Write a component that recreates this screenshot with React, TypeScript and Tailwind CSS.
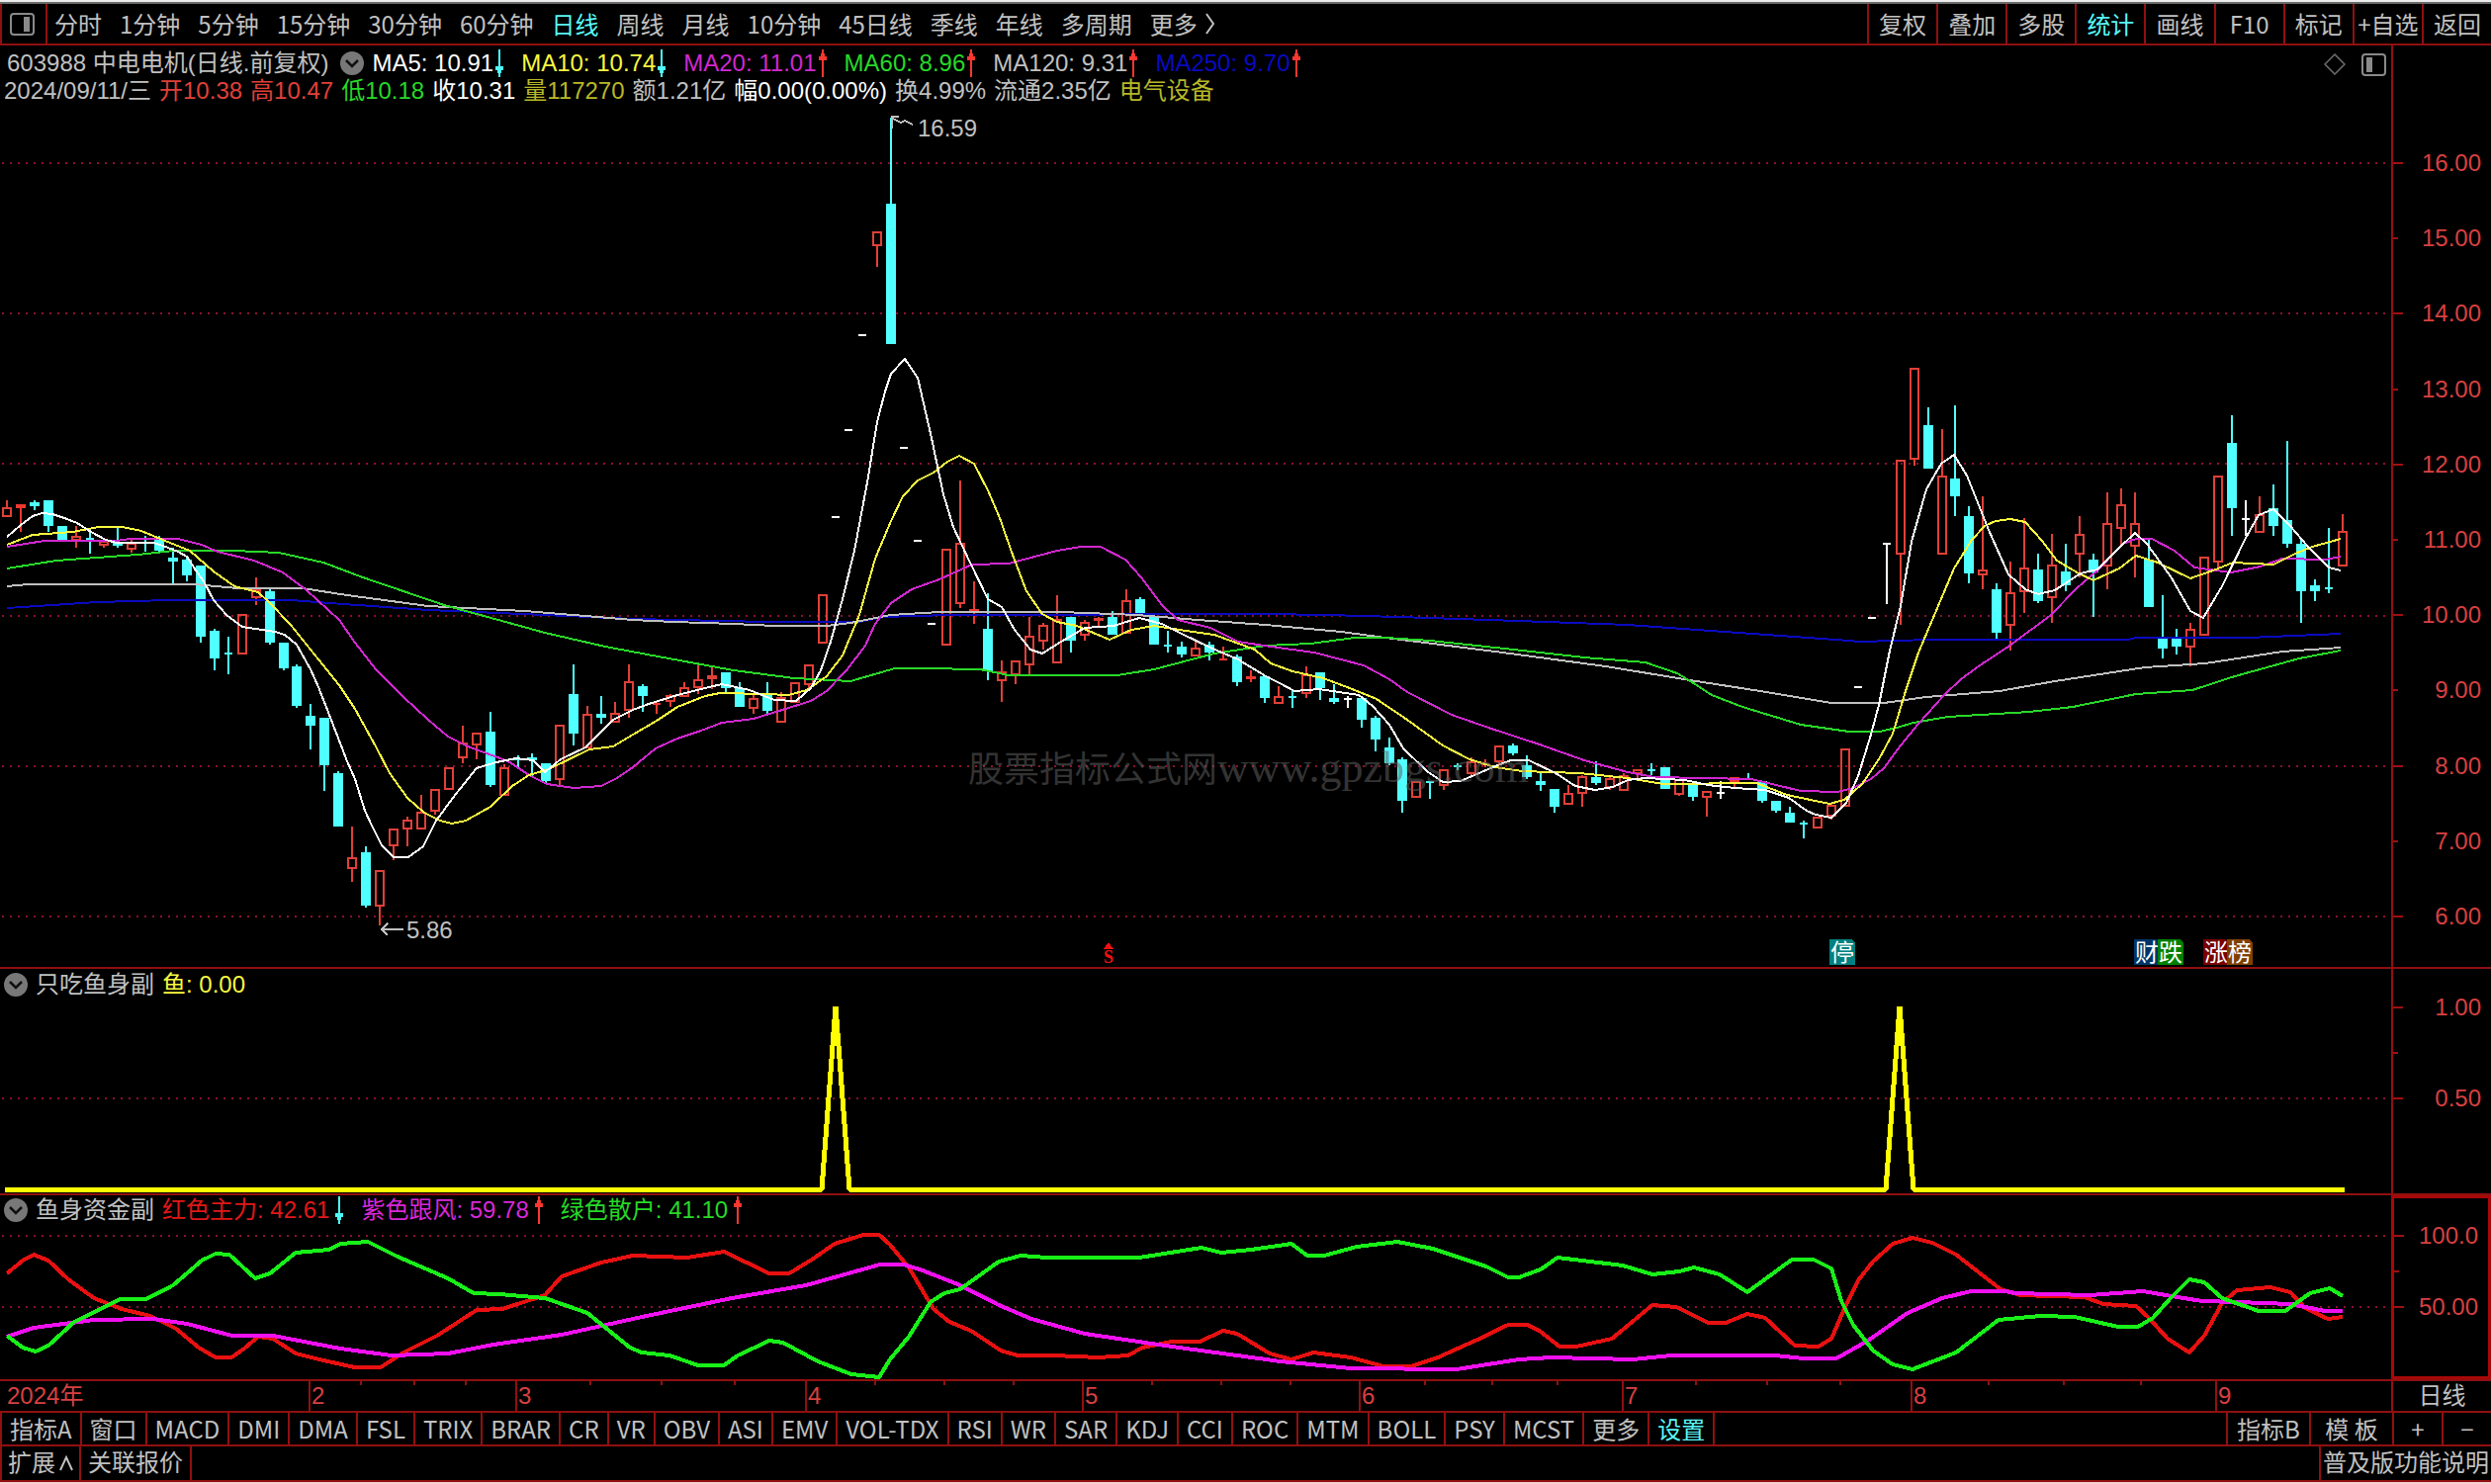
import { useState } from "react";

// kind: u = up (hollow), s = up (solid), d = down, w = flat, x = limit dash
type Candle = [string, number, number, number, number];

// kind, high, body top, body bottom, low
const CANDLES: Candle[] = [
  ["u", 506, 513, 523, 523], ["s", 510, 510, 514, 538], ["d", 506, 508, 512, 516],
  ["d", 506, 506, 532, 538], ["d", 532, 532, 546, 546], ["u", 532, 542, 547, 554],
  ["d", 537, 544, 546, 560], ["u", 547, 547, 552, 554], ["d", 533, 548, 552, 554],
  ["u", 546, 549, 556, 559], ["d", 542, 548, 549, 558], ["d", 542, 546, 557, 559],
  ["d", 554, 564, 568, 590], ["d", 564, 566, 582, 588], ["d", 572, 572, 644, 650],
  ["d", 636, 638, 666, 678], ["d", 644, 660, 662, 682], ["u", 621, 621, 662, 662],
  ["u", 584, 596, 605, 612], ["d", 596, 598, 650, 652], ["d", 650, 650, 676, 678],
  ["d", 672, 674, 714, 716], ["d", 712, 724, 734, 758], ["d", 726, 726, 774, 800],
  ["d", 780, 782, 836, 836], ["u", 836, 867, 879, 892], ["d", 856, 862, 916, 918],
  ["u", 880, 880, 917, 936], ["u", 838, 838, 856, 870], ["u", 826, 829, 839, 856],
  ["u", 804, 821, 839, 839], ["u", 798, 798, 821, 824], ["u", 776, 776, 799, 799],
  ["u", 734, 751, 767, 772], ["u", 741, 741, 754, 768], ["d", 720, 740, 794, 796],
  ["u", 773, 776, 805, 805], ["d", 764, 767, 769, 776], ["d", 762, 766, 769, 785],
  ["d", 772, 772, 790, 792], ["u", 733, 733, 789, 795], ["d", 672, 702, 742, 754],
  ["u", 714, 722, 757, 757], ["d", 704, 722, 726, 732], ["u", 710, 721, 731, 731],
  ["u", 672, 689, 719, 726], ["d", 692, 694, 704, 720], ["s", 709, 711, 713, 722],
  ["u", 702, 703, 710, 715], ["u", 690, 695, 705, 705], ["u", 670, 687, 696, 702],
  ["u", 674, 683, 687, 697], ["d", 680, 680, 696, 700], ["d", 690, 696, 715, 715],
  ["u", 702, 706, 717, 722], ["d", 690, 703, 719, 722], ["u", 700, 705, 731, 731],
  ["u", 690, 690, 711, 711], ["u", 672, 672, 693, 697], ["u", 601, 601, 651, 651],
  ["x", 523, 523, 523, 526], ["x", 435, 435, 435, 435], ["x", 339, 339, 339, 339],
  ["u", 234, 234, 249, 270], ["d", 119, 206, 348, 348], ["x", 453, 453, 453, 453],
  ["x", 547, 547, 547, 547], ["x", 631, 631, 631, 631], ["u", 555, 555, 653, 653],
  ["u", 486, 549, 611, 615], ["s", 588, 616, 619, 631], ["d", 600, 636, 679, 688],
  ["u", 668, 679, 689, 710], ["u", 668, 668, 683, 692], ["u", 624, 643, 673, 682],
  ["u", 630, 632, 649, 657], ["u", 602, 626, 671, 671], ["d", 624, 624, 648, 660],
  ["u", 627, 629, 643, 648], ["u", 624, 625, 628, 634], ["d", 618, 624, 642, 642],
  ["u", 596, 607, 641, 641], ["d", 604, 606, 620, 620], ["d", 624, 624, 652, 652],
  ["d", 638, 652, 654, 660], ["d", 649, 654, 662, 665], ["u", 649, 655, 664, 664],
  ["d", 649, 652, 660, 668], ["s", 654, 666, 668, 668], ["d", 662, 664, 690, 694],
  ["s", 678, 684, 687, 690], ["d", 684, 684, 706, 711], ["u", 694, 704, 712, 712],
  ["d", 699, 704, 706, 716], ["u", 674, 682, 702, 706], ["d", 680, 680, 696, 708],
  ["d", 692, 706, 710, 712], ["w", 704, 706, 708, 716], ["d", 706, 706, 728, 736],
  ["d", 724, 726, 748, 760], ["d", 746, 756, 772, 774], ["d", 766, 768, 810, 822],
  ["u", 790, 790, 807, 807], ["d", 790, 790, 792, 808], ["u", 778, 778, 795, 799],
  ["d", 772, 774, 775, 779], ["u", 766, 770, 783, 785], ["s", 768, 772, 774, 776],
  ["u", 754, 754, 771, 773], ["d", 752, 754, 762, 764], ["d", 764, 774, 786, 788],
  ["d", 780, 790, 794, 800], ["d", 798, 798, 816, 822], ["u", 794, 802, 814, 814],
  ["u", 784, 785, 803, 816], ["d", 770, 786, 792, 794], ["u", 784, 787, 797, 799],
  ["u", 782, 784, 800, 800], ["u", 778, 778, 783, 787], ["d", 772, 778, 780, 784],
  ["d", 776, 776, 798, 798], ["u", 788, 788, 804, 805], ["d", 792, 792, 806, 810],
  ["u", 800, 800, 807, 826], ["w", 790, 801, 803, 808], ["s", 786, 786, 792, 798],
  ["d", 782, 787, 789, 789], ["d", 790, 790, 810, 812], ["d", 810, 810, 820, 822],
  ["d", 816, 822, 832, 832], ["d", 830, 832, 834, 848], ["u", 826, 826, 838, 838],
  ["u", 813, 814, 826, 829], ["u", 757, 757, 816, 816], ["x", 695, 695, 695, 695],
  ["x", 625, 625, 625, 625], ["w", 549, 549, 550, 611], ["u", 465, 465, 561, 632],
  ["u", 372, 372, 465, 471], ["d", 412, 430, 474, 474], ["u", 434, 481, 561, 561],
  ["d", 410, 484, 502, 522], ["d", 512, 522, 580, 590], ["u", 502, 576, 582, 596],
  ["d", 590, 596, 640, 646], ["u", 568, 599, 633, 658], ["u", 524, 574, 599, 620],
  ["d", 560, 576, 608, 610], ["u", 540, 571, 605, 630], ["d", 550, 578, 592, 598],
  ["u", 522, 540, 561, 584], ["d", 560, 566, 579, 624], ["u", 498, 529, 573, 596],
  ["u", 494, 510, 535, 552], ["u", 498, 529, 553, 584], ["d", 546, 566, 614, 614],
  ["d", 602, 646, 656, 666], ["d", 636, 646, 654, 662], ["u", 630, 636, 655, 674],
  ["u", 563, 563, 643, 643], ["u", 481, 481, 569, 575], ["d", 420, 448, 514, 542],
  ["w", 506, 524, 526, 542], ["u", 502, 520, 539, 539], ["d", 490, 514, 532, 542],
  ["d", 446, 526, 550, 554], ["d", 546, 550, 598, 630], ["d", 586, 592, 598, 608],
  ["d", 534, 594, 596, 600], ["u", 520, 537, 573, 573],
];

// moving averages, drawn long to short
const AVERAGES = [
  {
    color: "#0a0ac0",
    points:
      "7,615 98,609 171,607 294,607 347,611 433,617 551,622 640,626 775,629 869,629 893,624 960,622 1280,621 1342,622 1414,624 1535,628 1646,632 1758,640 1870,648 1880,649 1953,647 2152,647 2160,645 2273,645 2367,641",
  },
  {
    color: "#c0c0c0",
    points:
      "7,593 29,591 196,591 241,595 306,595 351,602 433,613 531,618 640,627 681,629 742,631 783,633 836,633 860,630 901,622 950,619 1073,619 1150,622 1211,627 1280,632 1356,639 1401,645 1512,659 1624,674 1709,688 1780,699 1852,711 1905,711 1948,705 2022,699 2078,689 2169,675 2230,671 2308,659 2367,655",
  },
  {
    color: "#28d828",
    points:
      "7,575 57,567 139,561 176,557 237,557 282,559 327,569 367,584 408,598 449,612 482,621 551,640 612,654 660,663 742,678 803,686 860,689 905,676 934,676 991,677 1020,683 1130,683 1167,677 1228,661 1280,653 1325,651 1370,645 1401,645 1446,648 1512,655 1602,665 1664,670 1696,681 1711,690 1731,703 1762,715 1821,733 1870,740 1901,740 1918,736 1935,731 1970,725 2052,720 2096,715 2160,702 2217,698 2260,684 2325,666 2367,658",
  },
  {
    color: "#d028d0",
    points:
      "7,553 45,547 118,547 131,545 180,545 204,551 220,558 257,567 286,579 310,597 343,627 359,650 380,677 408,705 433,728 453,745 473,755 514,770 535,784 553,793 580,797 608,795 624,787 640,776 663,757 685,747 709,739 730,731 762,727 791,718 820,709 836,699 856,678 875,653 885,631 901,610 922,596 950,586 983,571 1020,570 1069,557 1093,553 1113,553 1138,566 1154,584 1175,612 1191,627 1224,635 1252,649 1285,654 1329,660 1379,673 1405,687 1423,700 1468,723 1508,737 1557,753 1602,769 1646,781 1673,786 1771,788 1821,800 1858,801 1874,797 1892,788 1905,777 1922,754 1940,732 1966,703 1983,687 2005,671 2031,654 2074,622 2100,595 2121,577 2147,550 2160,545 2176,545 2199,557 2219,574 2256,579 2286,573 2308,565 2351,566 2367,563",
  },
  {
    color: "#f8f840",
    points:
      "7,551 33,541 73,538 100,533 124,533 143,537 167,547 192,557 216,578 237,593 261,599 273,610 294,632 318,662 343,693 359,717 380,755 394,782 412,807 429,822 445,830 457,833 471,830 496,816 518,795 535,784 555,778 596,758 620,755 640,743 664,729 685,715 713,704 728,701 775,702 797,703 816,698 836,684 852,663 869,622 885,565 901,527 913,502 928,486 944,478 958,467 970,461 985,469 999,496 1011,524 1024,561 1038,598 1054,621 1069,629 1089,633 1122,647 1144,637 1167,633 1199,638 1228,642 1269,657 1285,671 1307,679 1338,686 1365,696 1392,707 1423,728 1459,754 1486,768 1512,776 1539,780 1597,782 1646,787 1682,793 1776,792 1807,804 1850,813 1865,809 1883,793 1900,768 1914,742 1927,699 1940,660 1957,620 1976,575 1994,546 2007,532 2018,527 2033,525 2048,528 2065,547 2080,567 2102,580 2117,587 2143,575 2160,562 2182,569 2215,585 2238,577 2258,569 2299,571 2321,560 2338,553 2367,545",
  },
  {
    color: "#ffffff",
    points:
      "7,543 21,531 33,522 43,519 53,520 65,524 78,529 92,538 107,546 118,549 155,549 165,552 180,558 189,563 198,577 206,588 216,607 229,622 245,634 265,637 278,639 288,642 300,652 314,677 322,695 333,723 351,770 359,788 369,820 376,835 386,855 398,867 413,867 428,856 441,830 461,803 482,777 502,771 522,767 539,769 551,781 567,768 592,756 620,728 640,718 656,712 685,703 713,696 730,692 758,698 783,708 805,709 820,696 830,678 840,649 852,606 864,557 877,488 887,427 895,396 901,378 915,363 928,382 942,443 954,500 964,533 981,569 999,606 1013,614 1026,637 1042,657 1054,661 1073,649 1097,635 1126,633 1152,625 1175,631 1195,641 1224,655 1252,667 1280,684 1294,691 1309,699 1334,697 1374,703 1388,714 1405,733 1419,757 1443,780 1459,791 1477,790 1512,775 1528,769 1546,769 1573,782 1593,795 1613,799 1631,796 1646,789 1664,787 1704,789 1727,794 1754,797 1785,799 1809,807 1827,820 1836,824 1852,827 1867,812 1879,785 1892,743 1900,713 1911,658 1922,613 1933,548 1948,495 1963,469 1976,460 1989,481 2011,536 2031,581 2048,596 2061,601 2078,597 2104,580 2121,576 2143,554 2159,539 2171,550 2195,583 2215,618 2228,625 2247,593 2271,544 2284,521 2299,515 2316,532 2334,553 2355,574 2367,577",
  },
];

const FLOWS = [
  {
    color: "#e81010",
    points:
      "7,1288 23,1275 34,1269 49,1275 69,1294 95,1313 123,1324 152,1331 178,1344 201,1363 218,1373 234,1373 247,1364 261,1352 276,1354 299,1369 327,1376 359,1383 385,1383 408,1368 442,1351 482,1325 508,1324 551,1310 568,1291 608,1277 640,1270 695,1272 732,1266 778,1288 798,1288 821,1274 844,1258 873,1249 889,1249 900,1259 919,1282 944,1324 960,1337 982,1346 1012,1366 1029,1371 1065,1371 1111,1373 1141,1371 1155,1363 1185,1357 1213,1357 1237,1346 1251,1349 1284,1369 1306,1375 1328,1368 1366,1373 1399,1382 1427,1382 1454,1373 1503,1351 1525,1340 1545,1340 1558,1347 1577,1362 1594,1362 1630,1354 1671,1320 1695,1322 1728,1338 1745,1338 1767,1329 1785,1333 1815,1361 1839,1362 1852,1354 1864,1326 1879,1295 1894,1276 1914,1258 1934,1252 1954,1257 1978,1269 2023,1304 2043,1310 2108,1312 2127,1319 2160,1321 2172,1332 2192,1354 2214,1368 2229,1351 2247,1318 2262,1305 2296,1302 2316,1307 2331,1323 2354,1334 2369,1332",
  },
  {
    color: "#f010f0",
    points:
      "7,1352 34,1343 95,1335 155,1334 189,1339 235,1351 276,1351 344,1364 396,1371 453,1369 499,1360 568,1350 649,1332 740,1313 815,1300 890,1279 914,1279 933,1285 971,1300 1010,1320 1043,1334 1097,1349 1185,1362 1295,1377 1366,1384 1473,1385 1536,1375 1569,1373 1651,1375 1690,1371 1795,1371 1824,1374 1857,1374 1889,1356 1929,1328 1964,1313 1993,1306 2028,1306 2038,1308 2113,1310 2167,1306 2202,1312 2227,1316 2262,1317 2316,1319 2351,1326 2369,1326",
  },
  {
    color: "#18f018",
    points:
      "7,1351 23,1363 36,1367 49,1361 75,1337 98,1326 121,1314 148,1314 175,1300 204,1275 218,1268 232,1269 258,1293 273,1288 299,1267 333,1264 344,1258 372,1256 402,1271 453,1293 479,1308 505,1309 551,1313 594,1328 637,1363 649,1368 677,1371 706,1381 732,1381 746,1371 778,1356 792,1358 827,1377 861,1390 889,1393 900,1375 919,1352 941,1317 955,1308 971,1304 1010,1276 1032,1270 1059,1272 1152,1272 1215,1262 1235,1267 1265,1264 1306,1258 1322,1270 1339,1270 1372,1261 1413,1256 1449,1263 1503,1281 1525,1292 1536,1292 1558,1284 1575,1272 1608,1276 1641,1280 1671,1289 1698,1286 1713,1282 1739,1289 1767,1307 1812,1274 1834,1274 1852,1283 1862,1316 1874,1340 1894,1366 1914,1380 1934,1385 1978,1368 2021,1335 2063,1331 2098,1332 2142,1342 2162,1342 2177,1333 2195,1313 2214,1294 2229,1297 2247,1313 2284,1326 2311,1326 2336,1308 2356,1303 2369,1311",
  },
];

const PERIODS = [
  "分时", "1分钟", "5分钟", "15分钟", "30分钟", "60分钟", "日线", "周线",
  "月线", "10分钟", "45日线", "季线", "年线", "多周期",
];

const TOOLS = ["复权", "叠加", "多股", "统计", "画线", "F10", "标记", "+自选", "返回"];

const INDICATORS = [
  "指标A", "窗口", "MACD", "DMI", "DMA", "FSL", "TRIX", "BRAR", "CR", "VR",
  "OBV", "ASI", "EMV", "VOL-TDX", "RSI", "WR", "SAR", "KDJ", "CCI", "ROC",
  "MTM", "BOLL", "PSY", "MCST", "更多", "设置",
];

const PRICES = [
  "16.00", "15.00", "14.00", "13.00", "12.00", "11.00", "10.00", "9.00",
  "8.00", "7.00", "6.00",
];

const MONTHS = [
  { x: 313, label: "2" }, { x: 522, label: "3" }, { x: 815, label: "4" },
  { x: 1095, label: "5" }, { x: 1375, label: "6" }, { x: 1641, label: "7" },
  { x: 1933, label: "8" }, { x: 2241, label: "9" },
];

const WEEKS = [
  365, 419, 471, 597, 669, 743, 885, 955, 1025, 1165, 1235, 1305, 1441, 1509,
  1575, 1715, 1787, 1861, 2011, 2087, 2165,
];

const BADGES = [
  { x: 1850, label: "停", color: "#008080" },
  { x: 2158, label: "财", color: "#003468" },
  { x: 2182, label: "跌", color: "#008000" },
  { x: 2228, label: "涨", color: "#780000" },
  { x: 2252, label: "榜", color: "#804000" },
];

const Arrow = ({ up = false }: { up?: boolean }) => (
  <svg
    width="12"
    height="28"
    viewBox="0 0 12 28"
    shapeRendering="crispEdges"
    className={up ? "shrink-0 text-[#f83830]" : "shrink-0 rotate-180 text-[#50f8f8]"}
  >
    <path d="M5 0h2v28h-2z M4 4h4v3h2v4h-8v-4h2z" fill="currentColor" />
  </svg>
);

const Toggle = ({ label }: { label: string }) => (
  <button type="button" aria-label={label} className="flex shrink-0">
    <svg width="24" height="24" viewBox="0 0 24 24">
      <circle cx="12" cy="12" r="12" fill="#787878" />
      <path d="M6 9l6 6 6-6" fill="none" stroke="#101010" strokeWidth="2.5" />
    </svg>
  </button>
);

const PanelIcon = ({ left = false }: { left?: boolean }) => (
  <svg width="25" height="23" viewBox="0 0 25 23">
    <rect x="1" y="1" width="23" height="21" rx="3" fill="none" stroke="#8a8a8a" strokeWidth="2" />
    <rect x={left ? 5 : 14} y="4" width="6" height="15" fill="#8a8a8a" />
  </svg>
);

const Grid = ({ rows }: { rows: number[] }) => (
  <>
    {rows.map((y) => (
      <line key={y} x1="2" x2="2416" y1={y} y2={y} stroke="#8c1030" strokeWidth="2" strokeDasharray="2 6" />
    ))}
  </>
);

const COLORS: Record<string, string> = {
  u: "#e04038",
  s: "#f03830",
  d: "#50ffff",
  w: "#ffffff",
  x: "#ffffff",
};

const CandleShape = ({ index, data }: { index: number; data: Candle }) => {
  const [kind, high, top, bottom, low] = data;
  const x = Math.round(7 + index * 13.975);
  const color = COLORS[kind];

  if (kind === "x") {
    return <rect x={x - 5} y={top - 1} width="8" height="2" fill={color} />;
  }

  const thin = bottom - top < 3;
  const half = thin ? 4 : 5;

  return (
    <g fill={color}>
      {high < top && <rect x={x - 1} y={high} width="2" height={top - high} />}
      {low > bottom && <rect x={x - 1} y={bottom} width="2" height={low - bottom} />}
      {kind === "u" ? (
        <rect
          x={x - 4}
          y={top + 1}
          width="8"
          height={Math.max(bottom - top - 2, 1)}
          fill="none"
          stroke={color}
          strokeWidth="2"
        />
      ) : (
        <rect x={x - half} y={top} width={half * 2} height={Math.max(bottom - top, 2)} />
      )}
    </g>
  );
};

const AxisLabel = ({ text, major = true }: { text: string; major?: boolean }) => (
  <div className="flex flex-1 items-center justify-between pr-[10px]">
    <i className={major ? "h-[2px] w-[10px] bg-[#a01010]" : "h-[2px] w-[5px] bg-[#a01010]"} />
    <span>{text}</span>
  </div>
);

export default function App() {
  const [period, setPeriod] = useState("日线");
  const [indicator, setIndicator] = useState("设置");

  return (
    <main className="flex h-screen flex-col overflow-hidden bg-black font-['Liberation_Sans','Noto_Sans_CJK_SC',sans-serif] text-[24px] leading-[28px] whitespace-nowrap text-[#c0c0c0]">
      <div className="h-[4px] shrink-0 border-b-2 border-[#686868] bg-[#ececec]" />

      {/* TOOLBAR */}

      <header className="flex h-[42px] shrink-0 justify-between border-b-2 border-l-2 border-[#901010] font-['Noto_Sans_CJK_SC',sans-serif]">
        <nav className="flex items-center">
          <button
            type="button"
            aria-label="侧栏"
            className="mr-[7px] flex h-full w-[46px] items-center border-r-2 border-[#901010] pl-2"
          >
            <PanelIcon />
          </button>
          <div className="flex gap-[18px]">
            {PERIODS.map((name) => (
              <button
                key={name}
                type="button"
                onClick={() => setPeriod(name)}
                className={name === period ? "text-[#58f8f8]" : ""}
              >
                {name}
              </button>
            ))}
            <button type="button" className="flex items-center gap-2">
              更多
              <svg width="10" height="22" viewBox="0 0 10 22">
                <path d="M1 1l7 10-7 10" fill="none" stroke="#c0c0c0" strokeWidth="2" />
              </svg>
            </button>
          </div>
        </nav>
        <div className="grid w-[631px] grid-cols-9">
          {TOOLS.map((name) => (
            <button
              key={name}
              type="button"
              className={
                name === "统计"
                  ? "border-l-2 border-[#901010] text-[#58f8f8]"
                  : "border-l-2 border-[#901010]"
              }
            >
              {name}
            </button>
          ))}
        </div>
      </header>

      {/* PRICE CHART */}

      <section className="flex min-h-0 flex-1 border-b-2 border-[#901010]">
        <div className="relative min-w-0 flex-1">
          <svg
            viewBox="0 46 2418 932"
            preserveAspectRatio="none"
            shapeRendering="crispEdges"
            className="block h-full w-full overflow-visible"
          >
            <Grid rows={[165, 317, 469, 623, 775, 927]} />
            {CANDLES.map((data, i) => (
              <CandleShape key={i} index={i} data={data} />
            ))}
            {AVERAGES.map((line) => (
              <polyline key={line.color} points={line.points} fill="none" stroke={line.color} strokeWidth="2" />
            ))}

            <g fill="none" stroke="#c0c0c0" strokeWidth="2">
              <path d="M902 130v-12h7 M903 120l8 4 4-2 8 4" />
              <path d="M386 940h22 M392 934l-6 6 6 6" />
            </g>
            <text x="928" y="138" fill="#c0c0c0">16.59</text>
            <text x="411" y="949" fill="#c0c0c0">5.86</text>

            <text y="791" fill="#606060" fillOpacity="0.55" className="font-['Liberation_Serif','Noto_Sans_CJK_SC',serif]">
              <tspan x="979" className="text-[36px]">股票指标公式网</tspan>
              <tspan x="1231" className="text-[44px]">www.gpzbgs.com</tspan>
            </text>

            <path d="M1121 953l5 7h-10z" fill="#f01010" />
            <text x="1116" y="974" fill="#f01010" className="font-['Liberation_Serif',serif] text-[18px] font-bold">
              S
            </text>

            {BADGES.map((badge) => (
              <g key={badge.label}>
                <path d={`M${badge.x} 950h22l4 4v22h-26z`} fill={badge.color} />
                <text x={badge.x + 1} y="972" fill="#ffffff">
                  {badge.label}
                </text>
              </g>
            ))}
          </svg>

          <div className="absolute top-[4px] left-0 flex h-[28px] items-center">
            <span className="pl-[7px]">603988 中电电机(日线.前复权)</span>
            <span className="flex pr-2 pl-3"><Toggle label="主图指标" /></span>
            <span className="text-white">MA5: 10.91</span>
            <Arrow />
            <span className="pl-4 text-[#f8f840]">MA10: 10.74</span>
            <Arrow />
            <span className="pl-4 text-[#d028d0]">MA20: 11.01</span>
            <Arrow up />
            <span className="pl-4 text-[#28d828]">MA60: 8.96</span>
            <Arrow up />
            <span className="pl-4">MA120: 9.31</span>
            <Arrow up />
            <span className="pl-4 text-[#0a0ac0]">MA250: 9.70</span>
            <Arrow up />
          </div>
          <div className="absolute top-[32px] left-0 flex gap-2 pl-[4px]">
            <span>2024/09/11/三</span>
            <span className="text-[#e04038]">开10.38</span>
            <span className="text-[#e04038]">高10.47</span>
            <span className="text-[#28d828]">低10.18</span>
            <span className="text-white">收10.31</span>
            <span className="text-[#b8b828]">量117270</span>
            <span>额1.21亿</span>
            <span className="text-white">幅0.00(0.00%)</span>
            <span>换4.99%</span>
            <span>流通2.35亿</span>
            <span className="text-[#b8b828]">电气设备</span>
          </div>
          <div className="absolute top-[7px] right-[5px] flex items-center gap-4">
            <svg width="22" height="24" viewBox="0 0 22 24">
              <path d="M11 2l10 10-10 10L1 12z" fill="none" stroke="#707070" strokeWidth="1.5" />
            </svg>
            <button type="button" aria-label="布局">
              <PanelIcon left />
            </button>
          </div>
        </div>
        <div className="flex w-[101px] flex-col border-l-2 border-[#901010] pt-[81px] pb-[13px] text-[#d84040]">
          {PRICES.map((price, i) => (
            <AxisLabel key={price} text={price} major={i % 2 === 0} />
          ))}
        </div>
      </section>

      {/* SIGNAL */}

      <section className="flex h-[229px] shrink-0 border-b-2 border-[#901010]">
        <div className="relative min-w-0 flex-1">
          <svg
            viewBox="0 980 2418 227"
            preserveAspectRatio="none"
            shapeRendering="crispEdges"
            className="block h-full w-full"
          >
            <Grid rows={[1111]} />
            <path
              d="M5 1203H831L845 1018L859 1203H1907L1921 1018L1935 1203H2371"
              fill="none"
              stroke="#ffff00"
              strokeWidth="5"
              strokeLinejoin="bevel"
            />
          </svg>
          <div className="absolute top-0 left-[4px] flex h-[32px] items-center gap-[8px]">
            <Toggle label="只吃鱼身副" />
            <span>只吃鱼身副</span>
            <span className="text-[#f8f840]">鱼: 0.00</span>
          </div>
        </div>
        <div className="flex w-[101px] flex-col border-l-2 border-[#901010] pt-[16px] pb-[4px] text-[#d84040]">
          <div className="flex h-[46px]"><AxisLabel text="1.00" /></div>
          <div className="flex h-[46px]"><AxisLabel text="" major={false} /></div>
          <div className="flex h-[46px]"><AxisLabel text="0.50" /></div>
        </div>
      </section>

      {/* MONEY FLOW */}

      <section className="flex h-[188px] shrink-0 border-b-2 border-[#901010]">
        <div className="relative min-w-0 flex-1">
          <svg
            viewBox="0 1209 2418 186"
            preserveAspectRatio="none"
            shapeRendering="crispEdges"
            className="block h-full w-full"
          >
            <Grid rows={[1250, 1322]} />
            {FLOWS.map((line) => (
              <polyline key={line.color} points={line.points} fill="none" stroke={line.color} strokeWidth="4" />
            ))}
          </svg>
          <div className="absolute top-0 left-[4px] flex h-[30px] items-center gap-[8px]">
            <Toggle label="鱼身资金副" />
            <span>鱼身资金副</span>
            <span className="flex items-center gap-1 pr-2 text-[#e01818]">红色主力: 42.61<Arrow /></span>
            <span className="flex items-center gap-1 pr-2 text-[#d828d8]">紫色跟风: 59.78<Arrow up /></span>
            <span className="flex items-center gap-1 text-[#28d828]">绿色散户: 41.10<Arrow up /></span>
          </div>
        </div>
        <div className="flex w-[101px] flex-col border-[3px] border-[#a80808] pt-[20px] text-[#d84040]">
          <div className="flex h-[36px]"><AxisLabel text="100.0" /></div>
          <div className="flex h-[36px]"><AxisLabel text="" major={false} /></div>
          <div className="flex h-[36px]"><AxisLabel text="50.00" /></div>
        </div>
      </section>

      {/* TIME AXIS */}

      <div className="flex h-[32px] shrink-0 border-b-2 border-[#901010]">
        <svg
          viewBox="0 1397 2418 30"
          preserveAspectRatio="none"
          shapeRendering="crispEdges"
          className="block h-full min-w-0 flex-1"
        >
          <text x="7" y="1420" fill="#d84040">2024年</text>
          {MONTHS.map((month) => (
            <g key={month.label}>
              <rect x={month.x - 1} y="1397" width="2" height="30" fill="#901010" />
              <text x={month.x + 2} y="1420" fill="#d84040">{month.label}</text>
            </g>
          ))}
          {WEEKS.map((x) => (
            <rect key={x} x={x - 1} y="1397" width="2" height="4" fill="#901010" />
          ))}
        </svg>
        <div className="flex w-[101px] items-center justify-center border-l-2 border-[#901010]">
          {period}
        </div>
      </div>

      {/* INDICATOR TABS */}

      <nav className="flex h-[34px] shrink-0 justify-between border-b-2 border-l-2 border-[#901010] font-['Noto_Sans_CJK_SC',sans-serif]">
        <div className="flex">
          {INDICATORS.map((name) => (
            <button
              key={name}
              type="button"
              onClick={() => setIndicator(name)}
              className={
                name === indicator
                  ? "border-r-2 border-[#901010] px-2 text-[#58f8f8]"
                  : "border-r-2 border-[#901010] px-2"
              }
            >
              {name}
            </button>
          ))}
        </div>
        <div className="flex">
          <button type="button" className="w-[84px] border-l-2 border-[#901010]">指标B</button>
          <button type="button" className="w-[84px] border-l-2 border-[#901010]">模 板</button>
          <button type="button" aria-label="放大" className="w-[50px] border-l-2 border-[#901010]">+</button>
          <button type="button" aria-label="缩小" className="w-[50px] border-l-2 border-[#901010]">−</button>
        </div>
      </nav>

      {/* FOOTER */}

      <footer className="flex h-[36px] shrink-0 justify-between border-b-2 border-l-2 border-[#901010]">
        <div className="flex">
          <button type="button" className="flex items-center gap-1 border-r-2 border-[#901010] px-[6px]">
            扩展
            <svg width="14" height="16" viewBox="0 0 14 16">
              <path d="M1 15L7 2l6 13" fill="none" stroke="#c0c0c0" strokeWidth="2" />
            </svg>
          </button>
          <button type="button" className="border-r-2 border-[#901010] px-[7px]">关联报价</button>
        </div>
        <a href="#help" className="flex items-center border-l-2 border-[#901010] px-[2px]">
          普及版功能说明
        </a>
      </footer>
      <div className="h-[2px] shrink-0 bg-[#f8d0d0]" />
    </main>
  );
}
